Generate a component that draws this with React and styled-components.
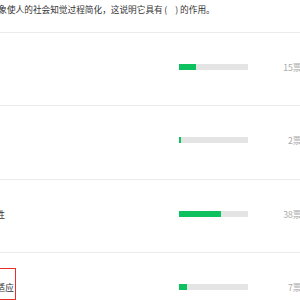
import React from 'react';
import styled, { createGlobalStyle } from 'styled-components';

const GlobalStyle = createGlobalStyle`
    body {
        margin: 0;
        background: #ffffff;
        overflow: hidden;
        font-family: "Noto Sans CJK SC", "Noto Sans", sans-serif;
    }
`;

const options = [
    { label: 'A. 积极', votes: 15 },
    { label: 'B. 消极', votes: 2 },
    { label: 'C. 稳定性', votes: 38 },
    { label: 'D. 社会适应', votes: 7, marked: true },
];

const total = options.reduce((sum, o) => sum + o.votes, 0);

function App() {
    return (
        <>
            <GlobalStyle />
            <Page>
                <Question>
                    刻板印象使人的社会知觉过程简化，这说明它具有<Blank><span>(</span><span>)</span></Blank>的作用。
                </Question>
                {options.map((o) => (
                    <Row key={o.label}>
                        <Label>
                            {o.label}
                            {o.marked && <Mark />}
                        </Label>
                        <Track>
                            <Fill style={{ width: `${(o.votes / total) * 100}%` }} />
                        </Track>
                        <Count>{o.votes}票</Count>
                    </Row>
                ))}
            </Page>
        </>
    );
}

export default App;

const Page = styled.div`
    margin-left: -31px;
    width: 332.5px;
`;

const Question = styled.div`
    box-sizing: border-box;
    height: 32px;
    padding: 2px 0 0 3.3px;
    font-size: 8.67px;
    line-height: 14px;
    color: #333333;
    white-space: nowrap;
`;

const Blank = styled.span`
    display: inline-flex;
    justify-content: space-between;
    box-sizing: border-box;
    width: 17.34px;
    padding: 0 2px 0 1.5px;
`;

const Row = styled.div`
    box-sizing: border-box;
    height: 73.33px;
    border-top: 1px solid #ebebeb;
    padding-bottom: 4px;
    display: grid;
    grid-template-columns: 210px 69px 1fr;
    align-items: center;
`;

const Label = styled.span`
    position: relative;
    justify-self: start;
    font-size: 8.67px;
    line-height: 12px;
    color: #333333;
    white-space: nowrap;
`;

const Mark = styled.span`
    position: absolute;
    top: -13px;
    bottom: -7px;
    left: -4px;
    right: -2px;
    border: 1.5px solid #e8302a;
`;

const Track = styled.div`
    height: 6px;
    background: #e4e4e4;
`;

const Fill = styled.div`
    height: 100%;
    background: #0dc15f;
`;

const Count = styled.span`
    justify-self: end;
    font-size: 8.67px;
    line-height: 12px;
    color: #aaaaaa;
    white-space: nowrap;
`;
